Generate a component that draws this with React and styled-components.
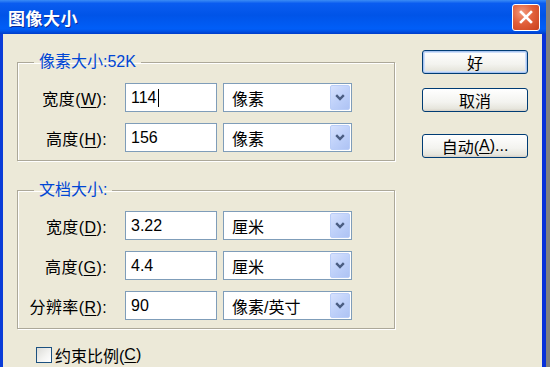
import React from 'react';
import styled, { createGlobalStyle } from 'styled-components';

const GlobalStyle = createGlobalStyle`
  html, body { margin: 0; padding: 0; }
  body {
    background: #808080;
    font-family: "Liberation Sans", "Noto Sans CJK SC", sans-serif;
    overflow: hidden;
  }
`;

const Window = styled.div`
  width: 546px;
  height: 367px;
  display: flex;
  flex-direction: column;
  overflow: hidden;
`;

const TitleBar = styled.div`
  height: 34px;
  flex: none;
  display: flex;
  align-items: center;
  justify-content: space-between;
  padding: 0 6px 0 8px;
  background: linear-gradient(
    to bottom,
    #3b8cf5 0%,
    #0a5cf0 10%,
    #0054e8 45%,
    #005ef8 85%,
    #0052e6 92%,
    #003cc8 100%
  );
`;

const Title = styled.div`
  color: #fff;
  font-family: "Noto Sans CJK SC", sans-serif;
  font-size: 17px;
  font-weight: 700;
  letter-spacing: 0.5px;
  text-shadow: 1px 1px 0 #0a2a9a;
`;

const CloseButton = styled.div`
  width: 28px;
  height: 27px;
  box-sizing: border-box;
  border: 1px solid #fff;
  border-radius: 3px;
  background: radial-gradient(circle at 35% 30%, #f29a7c 0%, #e2603a 45%, #c8401c 100%);
  display: flex;
  align-items: center;
  justify-content: center;
`;

const Client = styled.div`
  flex: 1;
  display: flex;
  align-items: flex-start;
  background: #ece9d8;
  border-left: 3px solid #0a3cd8;
  border-right: 4px solid #0831d9;
  padding: 16px 14px 0 14px;
`;

const LeftColumn = styled.div`
  width: 378px;
  padding-top: 3px;
  display: flex;
  flex-direction: column;
`;

const GroupBox = styled.fieldset`
  margin: ${p => (p.$gap ? '20px 0 0 0' : '0')};
  padding: 12px 0 8px 0;
  min-width: 0;
  border: 1px solid #aca899;
  box-shadow: inset 1px 1px 0 #fff, 1px 1px 0 #fff;
`;

const Legend = styled.legend`
  margin-left: 16px;
  padding: 0 5px;
  color: #0046d5;
  font-size: 16px;
  line-height: 18px;
`;

const Row = styled.div`
  display: flex;
  align-items: center;
  height: 29px;
  & + & {
    margin-top: 11px;
  }
`;

const Label = styled.div`
  width: 89px;
  text-align: right;
  white-space: nowrap;
  font-size: 16px;
  letter-spacing: 0.4px;
  color: #000;
`;

const TextBox = styled.div`
  width: 92px;
  height: 29px;
  box-sizing: border-box;
  margin-left: 18px;
  border: 1px solid #7f9db9;
  background: #fff;
  padding-left: 5px;
  display: flex;
  align-items: center;
  font-size: 16px;
  color: #000;
`;

const Caret = styled.span`
  display: inline-block;
  width: 1px;
  height: 18px;
  background: #000;
  margin-left: 1px;
`;

const Select = styled.div`
  width: 129px;
  height: 29px;
  box-sizing: border-box;
  margin-left: 6px;
  border: 1px solid #7f9db9;
  background: #fff;
  padding: 0 1px 0 8px;
  display: flex;
  align-items: center;
  justify-content: space-between;
  font-size: 16px;
  color: #000;
`;

const DropButton = styled.div`
  width: 20px;
  height: 25px;
  box-sizing: border-box;
  border: 1px solid #b9cdf8;
  border-radius: 2px;
  background: linear-gradient(135deg, #d6e1fd 0%, #bfd1fa 50%, #aec3f4 100%);
  display: flex;
  align-items: center;
  justify-content: center;
`;

const CheckRow = styled.div`
  display: flex;
  align-items: center;
  margin: 14px 0 0 19px;
  font-size: 16px;
  color: #000;
`;

const CheckBox = styled.div`
  width: 16px;
  height: 16px;
  box-sizing: border-box;
  border: 1px solid #1c5180;
  background: linear-gradient(135deg, #dcdcd7 0%, #f4f4f2 60%, #fff 100%);
  margin-right: 3px;
`;

const RightColumn = styled.div`
  width: 106px;
  margin-left: 27px;
  display: flex;
  flex-direction: column;
`;

const Button = styled.div`
  height: 24px;
  box-sizing: border-box;
  margin-top: ${p => p.$gap}px;
  border: 1px solid #003c74;
  border-radius: 3px;
  background: linear-gradient(to bottom, #ffffff 0%, #f3f3ef 60%, #e6e5dc 90%, #d6d0c5 100%);
  box-shadow: ${p => (p.$default ? 'inset 0 0 0 1px #a8c4f0, inset 0 0 0 2px #cfdff8' : 'none')};
  display: flex;
  align-items: center;
  justify-content: center;
  font-size: 16px;
  color: #000;
`;

const Key = styled.span`
  text-decoration: underline;
  text-underline-offset: 2px;
`;

const Chevron = () => (
  <svg width="10" height="7" viewBox="0 0 10 7">
    <path d="M1.2 1.2 L5 5 L8.8 1.2" fill="none" stroke="#4a5d82" strokeWidth="2.4" />
  </svg>
);

const CloseX = () => (
  <svg width="14" height="14" viewBox="0 0 14 14">
    <path d="M2 2 L12 12 M12 2 L2 12" stroke="#fff" strokeWidth="2.6" strokeLinecap="square" />
  </svg>
);

const Field = ({ label, k, value, unit, caret }) => (
  <Row>
    <Label>
      {label}(<Key>{k}</Key>):
    </Label>
    <TextBox>
      {value}
      {caret && <Caret />}
    </TextBox>
    <Select>
      <span>{unit}</span>
      <DropButton>
        <Chevron />
      </DropButton>
    </Select>
  </Row>
);

export default function App() {
  return (
    <>
      <GlobalStyle />
      <Window>
        <TitleBar>
          <Title>图像大小</Title>
          <CloseButton>
            <CloseX />
          </CloseButton>
        </TitleBar>
        <Client>
          <LeftColumn>
            <GroupBox>
              <Legend>像素大小:52K</Legend>
              <Field label="宽度" k="W" value="114" unit="像素" caret />
              <Field label="高度" k="H" value="156" unit="像素" />
            </GroupBox>
            <GroupBox $gap>
              <Legend>文档大小:</Legend>
              <Field label="宽度" k="D" value="3.22" unit="厘米" />
              <Field label="高度" k="G" value="4.4" unit="厘米" />
              <Field label="分辨率" k="R" value="90" unit="像素/英寸" />
            </GroupBox>
            <CheckRow>
              <CheckBox />
              约束比例(<Key>C</Key>)
            </CheckRow>
          </LeftColumn>
          <RightColumn>
            <Button $gap={0} $default>好</Button>
            <Button $gap={14}>取消</Button>
            <Button $gap={22}>
              自动(<Key>A</Key>)...
            </Button>
          </RightColumn>
        </Client>
      </Window>
    </>
  );
}
